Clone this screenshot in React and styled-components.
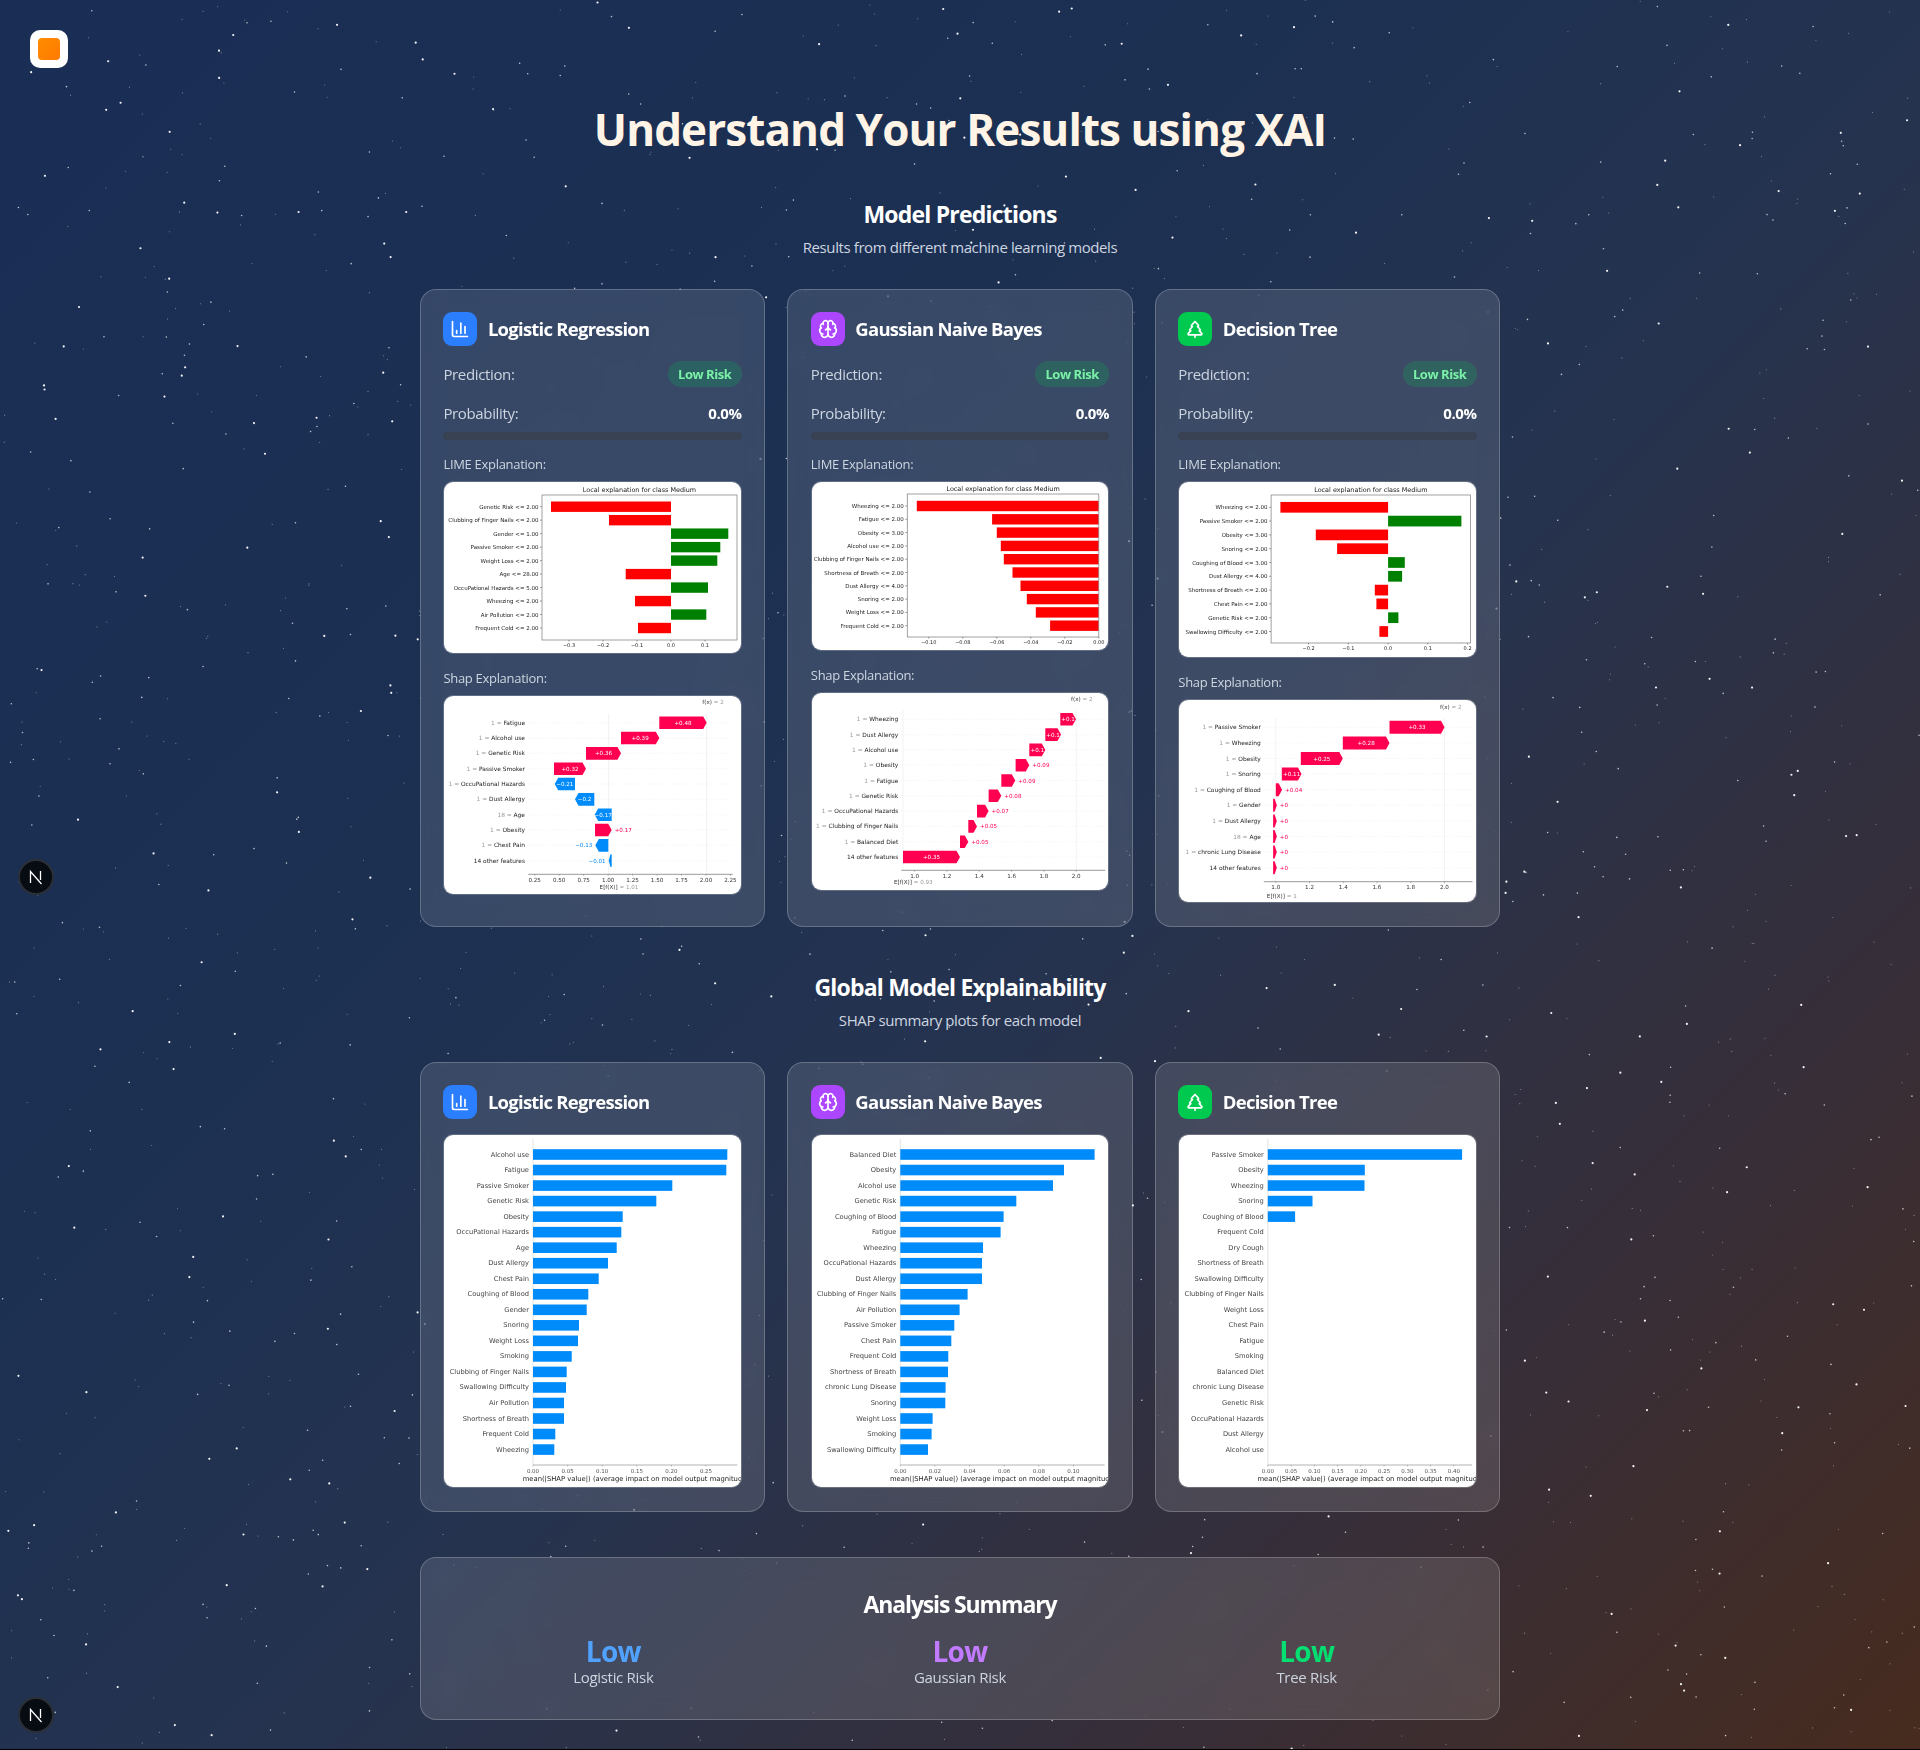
import React, { useMemo } from "react";
import styled, { createGlobalStyle } from "styled-components";
import { ChartColumn, Brain, TreePine } from "lucide-react";

const Global = createGlobalStyle`
  * { box-sizing: border-box; }
  html { background: #000; }
  body { margin: 0; font-family: "Open Sans", "Noto Sans", sans-serif; color: #fff; }
`;

const Page = styled.div`
  position: relative;
  height: 1749px;
  overflow: hidden;
  padding-top: 30px;
  background: linear-gradient(135deg, #1a2d55 0%, #1c3052 35%, #25334f 55%, #382e37 80%, #472b1e 100%);
`;
const StarField = styled.svg`
  position: absolute;
  inset: 0;
  width: 100%;
  height: 100%;
`;
const TopBar = styled.header`
  position: relative;
  padding-left: 30px;
`;
const LogoBox = styled.div`
  width: 38px;
  height: 38px;
  border-radius: 10px;
  background: #fff;
  display: flex;
  align-items: center;
  justify-content: center;
`;
const LogoCore = styled.div`
  width: 22px;
  height: 22px;
  border-radius: 4px;
  background: linear-gradient(135deg, #ff8c00, #ff7a00);
`;
const Main = styled.main`
  position: relative;
  width: 1080px;
  margin: 0 auto;
`;
const PageTitle = styled.h1`
  margin: 31px 0 39px;
  font-size: 44px;
  line-height: 60px;
  font-weight: 700;
  letter-spacing: -0.9px;
  text-align: center;
  color: #fff4e6;
`;
const SectionTitle = styled.h2`
  margin: 0 0 5px;
  font-size: 23px;
  line-height: 32px;
  font-weight: 700;
  letter-spacing: -0.8px;
  text-align: center;
  color: #fff;
`;
const SectionSub = styled.p`
  margin: 0 0 30px;
  font-size: 15px;
  line-height: 24px;
  letter-spacing: -0.4px;
  text-align: center;
  color: #cdd5e0;
`;
const CardGrid = styled.div`
  display: grid;
  grid-template-columns: repeat(3, 1fr);
  gap: 22.4px;
  margin-bottom: ${(p) => p.$after}px;
`;
const Card = styled.article`
  border: 1px solid rgba(255, 255, 255, 0.22);
  border-radius: 16px;
  padding: 22px 22.4px 23px;
  background: rgba(255, 255, 255, 0.12);
  backdrop-filter: blur(10px);
`;
const CardHead = styled.div`
  display: flex;
  align-items: center;
  gap: 10.5px;
  height: 34px;
  margin-bottom: 15px;
`;
const IconTile = styled.div`
  width: 34px;
  height: 34px;
  border-radius: 9px;
  background: ${(p) => p.$color};
  display: flex;
  align-items: center;
  justify-content: center;
  color: #fff;
`;
const CardTitle = styled.h3`
  margin: 0;
  padding-bottom: 2px;
  font-size: 18.5px;
  font-weight: 700;
  letter-spacing: -0.75px;
  color: #fff;
`;
const Row = styled.div`
  display: flex;
  align-items: center;
  justify-content: space-between;
  height: ${(p) => p.$h}px;
  margin-bottom: ${(p) => p.$mb}px;
`;
const RowLabel = styled.span`
  font-size: 15px;
  letter-spacing: -0.35px;
  color: #cdd5e0;
`;
const RowValue = styled.span`
  font-size: 15px;
  font-weight: 700;
  letter-spacing: -0.4px;
  color: #fff;
`;
const Badge = styled.span`
  display: flex;
  align-items: center;
  justify-content: center;
  width: 74px;
  height: 26px;
  border-radius: 13px;
  background: rgba(0, 201, 80, 0.2);
  color: #7bf1a8;
  font-size: 13px;
  font-weight: 700;
  letter-spacing: -0.45px;
`;
const Track = styled.div`
  height: 8px;
  border-radius: 4px;
  background: #384253;
  margin-bottom: 14px;
`;
const ExplainLabel = styled.div`
  font-size: 13px;
  line-height: 20px;
  letter-spacing: -0.3px;
  color: #cdd5e0;
  margin-bottom: 7px;
`;
const Plot = styled.div`
  width: 100%;
  height: ${(p) => p.$h}px;
  margin-bottom: ${(p) => p.$mb || 0}px;
  border-radius: 10px;
  border: 1px solid rgba(255, 255, 255, 0.2);
  background: #fff;
  background-clip: padding-box;
  overflow: hidden;
`;
const PlotSvg = styled.svg`
  display: block;
  margin: -1px;
  filter: blur(0.3px);
  font-family: "DejaVu Sans", sans-serif;
`;
const Summary = styled.section`
  height: 163px;
  border: 1px solid rgba(255, 255, 255, 0.22);
  border-radius: 16px;
  padding: 30px 31px 0;
  background: rgba(255, 255, 255, 0.12);
  backdrop-filter: blur(10px);
`;
const SummaryTitle = styled(SectionTitle)`
  margin-bottom: 15px;
  letter-spacing: -1.15px;
`;
const SummaryGrid = styled.div`
  display: grid;
  grid-template-columns: repeat(3, 1fr);
  gap: 24px;
`;
const Stat = styled.div`
  text-align: center;
`;
const StatValue = styled.div`
  font-size: 28px;
  line-height: 32px;
  font-weight: 700;
  letter-spacing: -0.7px;
  color: ${(p) => p.$color};
`;
const StatLabel = styled.div`
  font-size: 15px;
  line-height: 20px;
  letter-spacing: -0.3px;
  color: #cdd5e0;
`;
const DevBadge = styled.div`
  position: absolute;
  left: 18px;
  top: ${(p) => p.$top}px;
  width: 36px;
  height: 36px;
  border-radius: 50%;
  background: #070b12;
  border: 2px solid #2b2f36;
  display: flex;
  align-items: center;
  justify-content: center;
`;

/* ---------- charts ---------- */
const RED = "#ff0051";
const BLUE = "#008bfb";

function ticksOf(t) {
  return t.labels.map((l, i) => [t.first + i * t.step, l]);
}

function LimeChart({ c, shift = 0 }) {
  const { h, l, t, r, b, zero, y0, dy, barH, tick, rows } = c;
  return (
    <PlotSvg width="298" height={h} viewBox={`${-shift} 0 298 ${h}`}>
      <text x={(l + r) / 2} y={t - 3.5} fontSize="6.45" fill="#222" textAnchor="middle">
        Local explanation for class Medium
      </text>
      {rows.map(([label, off], i) => {
        const y = y0 + i * dy;
        return (
          <g key={label}>
            <text x={l - 3.5} y={y + 2} fontSize="5.5" fill="#222" textAnchor="end">{label}</text>
            <line x1={l - 2} x2={l} y1={y} y2={y} stroke="#333" strokeWidth="0.5" />
            <rect x={off < 0 ? zero + off : zero} y={y - barH / 2} width={Math.abs(off)} height={barH} fill={off < 0 ? "#ff0000" : "#008000"} />
          </g>
        );
      })}
      <rect x={l} y={t} width={r - l} height={b - t} fill="none" stroke="#8a8a8a" strokeWidth="0.8" />
      {ticksOf(tick).map(([x, label]) => (
        <g key={label}>
          <line x1={x} x2={x} y1={b} y2={b + 1.5} stroke="#333" strokeWidth="0.5" />
          <text x={x} y={b + 7} fontSize="5" fill="#222" textAnchor="middle">{label}</text>
        </g>
      ))}
    </PlotSvg>
  );
}

function ShapChart({ c, shift = 0 }) {
  const { h, y0, dy, barH, labelX, axisY, axisL, axisR, tick, rows, fx, ex } = c;
  return (
    <PlotSvg width="298" height={h} viewBox={`${-shift} 0 298 ${h}`}>
      <line x1={fx.line} x2={fx.line} y1={y0 - 9} y2={axisY} stroke="#e4e4e4" strokeWidth="0.5" />
      <line x1={ex.line} x2={ex.line} y1={y0 - 9} y2={axisY} stroke="#e4e4e4" strokeWidth="0.5" />
      <text x={fx.x} y={fx.y} fontSize="5.6" textAnchor="middle" fill="#333">
        f(x) <tspan fill="#999">= 2</tspan>
      </text>
      {rows.map(([pre, name, a, b, val, inside], i) => {
        const y = y0 + i * dy;
        const pos = val[0] === "+";
        const tip = Math.min(3.5, (b - a) * 0.6);
        const top = y - barH / 2;
        const bot = y + barH / 2;
        const pts = pos
          ? `${a},${top} ${b - tip},${top} ${b},${y} ${b - tip},${bot} ${a},${bot}`
          : `${a + tip},${top} ${b},${top} ${b},${bot} ${a + tip},${bot} ${a},${y}`;
        const col = pos ? RED : BLUE;
        return (
          <g key={name}>
            <line x1={axisL} x2={axisR} y1={y} y2={y} stroke="#ddd" strokeWidth="0.4" strokeDasharray="1 2" />
            <text x={labelX} y={y + 2} fontSize="5.9" textAnchor="end" fill="#222">
              {pre && <tspan fill="#999">{pre} = </tspan>}
              {name}
            </text>
            <polygon points={pts} fill={col} />
            {inside ? (
              <text x={(a + b) / 2} y={y + 2} fontSize="5.6" fill="#fff" textAnchor="middle">{val}</text>
            ) : pos ? (
              <text x={b + 3} y={y + 2} fontSize="5.6" fill={col}>{val}</text>
            ) : (
              <text x={a - 3} y={y + 2} fontSize="5.6" fill={col} textAnchor="end">{val}</text>
            )}
          </g>
        );
      })}
      <line x1={axisL} x2={axisR} y1={axisY} y2={axisY} stroke="#555" strokeWidth="0.6" />
      {ticksOf(tick).map(([x, label]) => (
        <g key={label}>
          <line x1={x} x2={x} y1={axisY} y2={axisY + 1.5} stroke="#555" strokeWidth="0.4" />
          <text x={x} y={axisY + 7.5} fontSize="5.6" fill="#333" textAnchor="middle">{label}</text>
        </g>
      ))}
      <text x={ex.x} y={ex.y} fontSize="5.6" textAnchor="middle" fill="#333">
        E[f(X)] <tspan fill="#999">= {ex.v}</tspan>
      </text>
    </PlotSvg>
  );
}

function SummaryChart({ c, shift = 0 }) {
  const { zero, ends, names, tick, axisR, xlabelX } = c;
  return (
    <PlotSvg width="298" height="354" viewBox={`${-shift} 0 298 354`}>
      <line x1={zero} x2={zero} y1="5" y2="331" stroke="#ddd" strokeWidth="0.8" />
      {names.map((name, i) => {
        const y = 20.5 + i * 15.53;
        return (
          <g key={name}>
            <text x={zero - 4} y={y + 2} fontSize="6.7" fill="#444" textAnchor="end">{name}</text>
            {ends[i] > 0 && <rect x={zero} y={y - 5.3} width={ends[i]} height="10.6" fill={BLUE} />}
          </g>
        );
      })}
      <line x1={zero} x2={axisR} y1="331" y2="331" stroke="#666" strokeWidth="0.5" />
      {ticksOf(tick).map(([x, label]) => (
        <g key={label}>
          <line x1={x} x2={x} y1="331" y2="332.5" stroke="#666" strokeWidth="0.4" />
          <text x={x} y="339" fontSize="5.5" fill="#555" textAnchor="middle">{label}</text>
        </g>
      ))}
      <text x={xlabelX} y="347" fontSize="6.8" fill="#222">
        mean(|SHAP value|) (average impact on model output magnitude)
      </text>
    </PlotSvg>
  );
}

const limeA = {
  h: 173, l: 99, t: 14, r: 294, b: 159, zero: 228, y0: 25.7, dy: 13.48, barH: 10.4,
  tick: { first: 126, step: 34, labels: ["−0.3", "−0.2", "−0.1", "0.0", "0.1"] },
  rows: [
    ["Genetic Risk <= 2.00", -120], ["Clubbing of Finger Nails <= 2.00", -62], ["Gender <= 1.00", 57.3],
    ["Passive Smoker <= 2.00", 49.3], ["Weight Loss <= 2.00", 46.3], ["Age <= 28.00", -45.3],
    ["OccuPational Hazards <= 5.00", 37], ["Wheezing <= 2.00", -36], ["Air Pollution <= 2.00", 35.3],
    ["Frequent Cold <= 2.00", -33],
  ],
};
const limeB = {
  h: 170, l: 96, t: 13, r: 287.5, b: 156, zero: 287.5, y0: 25, dy: 13.3, barH: 10.4,
  tick: { first: 117.5, step: 34, labels: ["−0.10", "−0.08", "−0.06", "−0.04", "−0.02", "0.00"] },
  rows: [
    ["Wheezing <= 2.00", -182], ["Fatigue <= 2.00", -106.7], ["Obesity <= 3.00", -102],
    ["Alcohol use <= 2.00", -98], ["Clubbing of Finger Nails <= 2.00", -95], ["Shortness of Breath <= 2.00", -86.3],
    ["Dust Allergy <= 4.00", -78.3], ["Snoring <= 2.00", -72], ["Weight Loss <= 2.00", -63],
    ["Frequent Cold <= 2.00", -48.7],
  ],
};
const limeC = {
  h: 177, l: 92.3, t: 14, r: 291.7, b: 162, zero: 209.3, y0: 26.3, dy: 13.8, barH: 10.7,
  tick: { first: 129.8, step: 39.75, labels: ["−0.2", "−0.1", "0.0", "0.1", "0.2"] },
  rows: [
    ["Wheezing <= 2.00", -107.7], ["Passive Smoker <= 2.00", 73.3], ["Obesity <= 3.00", -72.3],
    ["Snoring <= 2.00", -51], ["Coughing of Blood <= 3.00", 16.7], ["Dust Allergy <= 4.00", 14],
    ["Shortness of Breath <= 2.00", -13.3], ["Chest Pain <= 2.00", -11.7], ["Genetic Risk <= 2.00", 10.3],
    ["Swallowing Difficulty <= 2.00", -8.7],
  ],
};

const shapA = {
  h: 200, y0: 27.7, dy: 15.33, barH: 12.6, labelX: 82, axisY: 179.3, axisL: 85.3, axisR: 289.7,
  fx: { x: 270, y: 9, line: 263.7 }, ex: { x: 176, y: 194, line: 165.7, v: "1.01" },
  tick: { first: 91.7, step: 24.47, labels: ["0.25", "0.50", "0.75", "1.00", "1.25", "1.50", "1.75", "2.00", "2.25"] },
  rows: [
    ["1", "Fatigue", 216.3, 263.7, "+0.48", true],
    ["1", "Alcohol use", 178, 216.3, "+0.39", true],
    ["1", "Genetic Risk", 143, 178, "+0.36", true],
    ["1", "Passive Smoker", 111, 143, "+0.32", true],
    ["1", "OccuPational Hazards", 111.7, 132, "−0.21", true],
    ["1", "Dust Allergy", 132, 151.3, "−0.2", true],
    ["18", "Age", 151.7, 168.7, "−0.17", true],
    ["1", "Obesity", 152, 168.7, "+0.17", false],
    ["1", "Chest Pain", 152.3, 165.3, "−0.13", false],
    ["", "14 other features", 165.7, 168.7, "−0.01", false],
  ],
};
const shapB = {
  h: 199, y0: 27.3, dy: 15.3, barH: 12.6, labelX: 87, axisY: 178.3, axisL: 90, axisR: 294,
  fx: { x: 270.5, y: 9, line: 265 }, ex: { x: 102, y: 191.5, line: 91.7, v: "0.93" },
  tick: { first: 103.3, step: 32.33, labels: ["1.0", "1.2", "1.4", "1.6", "1.8", "2.0"] },
  rows: [
    ["1", "Wheezing", 249, 264.7, "+0.1", true],
    ["1", "Dust Allergy", 234, 249.7, "+0.1", true],
    ["1", "Alcohol use", 218, 234, "+0.1", true],
    ["1", "Obesity", 204.3, 218, "+0.09", false],
    ["1", "Fatigue", 190, 204, "+0.09", false],
    ["1", "Genetic Risk", 177.3, 190, "+0.08", false],
    ["1", "OccuPational Hazards", 165.7, 177.3, "+0.07", false],
    ["1", "Clubbing of Finger Nails", 157, 165.7, "+0.05", false],
    ["1", "Balanced Diet", 148.7, 157, "+0.05", false],
    ["", "14 other features", 91.7, 148.7, "+0.35", true],
  ],
};
const shapC = {
  h: 204, y0: 28.3, dy: 15.6, barH: 13, labelX: 82, axisY: 182.7, axisL: 85, axisR: 293.7,
  fx: { x: 272, y: 9.5, line: 265.7 }, ex: { x: 103, y: 198.5, line: 97, v: "1" },
  tick: { first: 97, step: 33.73, labels: ["1.0", "1.2", "1.4", "1.6", "1.8", "2.0"] },
  rows: [
    ["1", "Passive Smoker", 210.7, 265.7, "+0.33", true],
    ["1", "Wheezing", 164, 210.7, "+0.28", true],
    ["1", "Obesity", 122, 164, "+0.25", true],
    ["1", "Snoring", 103, 122.7, "+0.11", true],
    ["1", "Coughing of Blood", 97, 103.3, "+0.04", false],
    ["1", "Gender", 94.3, 98, "+0", false],
    ["1", "Dust Allergy", 94.3, 98, "+0", false],
    ["18", "Age", 94.3, 98, "+0", false],
    ["1", "chronic Lung Disease", 94.3, 98, "+0", false],
    ["", "14 other features", 94.3, 98, "+0", false],
  ],
};

const sumA = {
  zero: 90, axisR: 294.3, xlabelX: 79.7,
  tick: { first: 90, step: 34.6, labels: ["0.00", "0.05", "0.10", "0.15", "0.20", "0.25"] },
  names: ["Alcohol use", "Fatigue", "Passive Smoker", "Genetic Risk", "Obesity", "OccuPational Hazards", "Age", "Dust Allergy", "Chest Pain", "Coughing of Blood", "Gender", "Snoring", "Weight Loss", "Smoking", "Clubbing of Finger Nails", "Swallowing Difficulty", "Air Pollution", "Shortness of Breath", "Frequent Cold", "Wheezing"],
  ends: [194.3, 193.3, 139.3, 123.3, 89.7, 88.3, 83.7, 75, 65.7, 55.3, 53.7, 46, 45, 38.7, 33.7, 33, 31, 31, 22.3, 21.3],
};
const sumB = {
  zero: 89, axisR: 293.3, xlabelX: 78.7,
  tick: { first: 89, step: 34.63, labels: ["0.00", "0.02", "0.04", "0.06", "0.08", "0.10"] },
  names: ["Balanced Diet", "Obesity", "Alcohol use", "Genetic Risk", "Coughing of Blood", "Fatigue", "Wheezing", "OccuPational Hazards", "Dust Allergy", "Clubbing of Finger Nails", "Air Pollution", "Passive Smoker", "Chest Pain", "Frequent Cold", "Shortness of Breath", "chronic Lung Disease", "Snoring", "Weight Loss", "Smoking", "Swallowing Difficulty"],
  ends: [194.3, 163.7, 152.7, 116, 103.3, 100.3, 82.7, 81.7, 81.7, 67.3, 59.3, 54, 51, 48, 47.7, 45.3, 45, 32.3, 31.3, 27.7],
};
const sumC = {
  zero: 89, axisR: 293.3, xlabelX: 78.7,
  tick: { first: 89, step: 23.25, labels: ["0.00", "0.05", "0.10", "0.15", "0.20", "0.25", "0.30", "0.35", "0.40"] },
  names: ["Passive Smoker", "Obesity", "Wheezing", "Snoring", "Coughing of Blood", "Frequent Cold", "Dry Cough", "Shortness of Breath", "Swallowing Difficulty", "Clubbing of Finger Nails", "Weight Loss", "Chest Pain", "Fatigue", "Smoking", "Balanced Diet", "chronic Lung Disease", "Genetic Risk", "OccuPational Hazards", "Dust Allergy", "Alcohol use"],
  ends: [194.3, 97, 96.7, 44.7, 27.3, 0, 0, 0, 0, 0, 0, 0, 0, 0, 0, 0, 0, 0, 0, 0],
};

const MODELS = [
  { name: "Logistic Regression", color: "#2b7fff", Icon: ChartColumn, lime: limeA, shap: shapA, sum: sumA, shift: 0 },
  { name: "Gaussian Naive Bayes", color: "#ad46ff", Icon: Brain, lime: limeB, shap: shapB, sum: sumB, shift: 0.3 },
  { name: "Decision Tree", color: "#00c950", Icon: TreePine, lime: limeC, shap: shapC, sum: sumC, shift: 0.8 },
];

const STATS = [
  { v: "Low", c: "#51a2ff", l: "Logistic Risk" },
  { v: "Low", c: "#c27aff", l: "Gaussian Risk" },
  { v: "Low", c: "#05df72", l: "Tree Risk" },
];

function useStars(n) {
  return useMemo(() => {
    let s = 20240611;
    const rnd = () => {
      s |= 0; s = (s + 0x6d2b79f5) | 0;
      let t = Math.imul(s ^ (s >>> 15), 1 | s);
      t = (t + Math.imul(t ^ (t >>> 7), 61 | t)) ^ t;
      return ((t ^ (t >>> 14)) >>> 0) / 4294967296;
    };
    return Array.from({ length: n }, () => {
      const k = rnd();
      return {
        x: +(rnd() * 1920).toFixed(1),
        y: +(rnd() * 1750).toFixed(1),
        r: k > 0.85 ? 1.1 : k > 0.5 ? 0.8 : 0.55,
        o: k > 0.85 ? 0.95 : k > 0.5 ? 0.7 : 0.45,
      };
    });
  }, [n]);
}

function Head({ m }) {
  const { Icon } = m;
  return (
    <CardHead>
      <IconTile $color={m.color}><Icon size={20} strokeWidth={2} /></IconTile>
      <CardTitle>{m.name}</CardTitle>
    </CardHead>
  );
}

function NextMark() {
  return (
    <svg width="16" height="16" viewBox="0 0 16 16" fill="none" stroke="#fff" strokeWidth="1.3">
      <path d="M2.5 14V2.5L13.5 15" />
      <path d="M12.5 2v9" />
    </svg>
  );
}

export default function App() {
  const stars = useStars(2100);
  return (
    <Page>
      <Global />
      <StarField viewBox="0 0 1920 1750" aria-hidden="true">
        {stars.map((d, i) => (
          <circle key={i} cx={d.x} cy={d.y} r={d.r} fill="#fff" opacity={d.o} />
        ))}
      </StarField>
      <TopBar><LogoBox><LogoCore /></LogoBox></TopBar>
      <Main>
        <PageTitle>Understand Your Results using XAI</PageTitle>

        <SectionTitle>Model Predictions</SectionTitle>
        <SectionSub>Results from different machine learning models</SectionSub>
        <CardGrid $after={44}>
          {MODELS.map((m) => (
            <Card key={m.name}>
              <Head m={m} />
              <Row $h={26} $mb={15}>
                <RowLabel>Prediction:</RowLabel>
                <Badge>Low Risk</Badge>
              </Row>
              <Row $h={22} $mb={8}>
                <RowLabel>Probability:</RowLabel>
                <RowValue>0.0%</RowValue>
              </Row>
              <Track />
              <ExplainLabel>LIME Explanation:</ExplainLabel>
              <Plot $h={m.lime.h} $mb={14}><LimeChart c={m.lime} shift={m.shift} /></Plot>
              <ExplainLabel>Shap Explanation:</ExplainLabel>
              <Plot $h={m.shap.h}><ShapChart c={m.shap} shift={m.shift} /></Plot>
            </Card>
          ))}
        </CardGrid>

        <SectionTitle>Global Model Explainability</SectionTitle>
        <SectionSub>SHAP summary plots for each model</SectionSub>
        <CardGrid $after={45}>
          {MODELS.map((m) => (
            <Card key={m.name}>
              <Head m={m} />
              <Plot $h={354}><SummaryChart c={m.sum} shift={m.shift} /></Plot>
            </Card>
          ))}
        </CardGrid>

        <Summary>
          <SummaryTitle>Analysis Summary</SummaryTitle>
          <SummaryGrid>
            {STATS.map((s) => (
              <Stat key={s.l}>
                <StatValue $color={s.c}>{s.v}</StatValue>
                <StatLabel>{s.l}</StatLabel>
              </Stat>
            ))}
          </SummaryGrid>
        </Summary>
      </Main>
      <DevBadge $top={859}><NextMark /></DevBadge>
      <DevBadge $top={1697}><NextMark /></DevBadge>
    </Page>
  );
}
